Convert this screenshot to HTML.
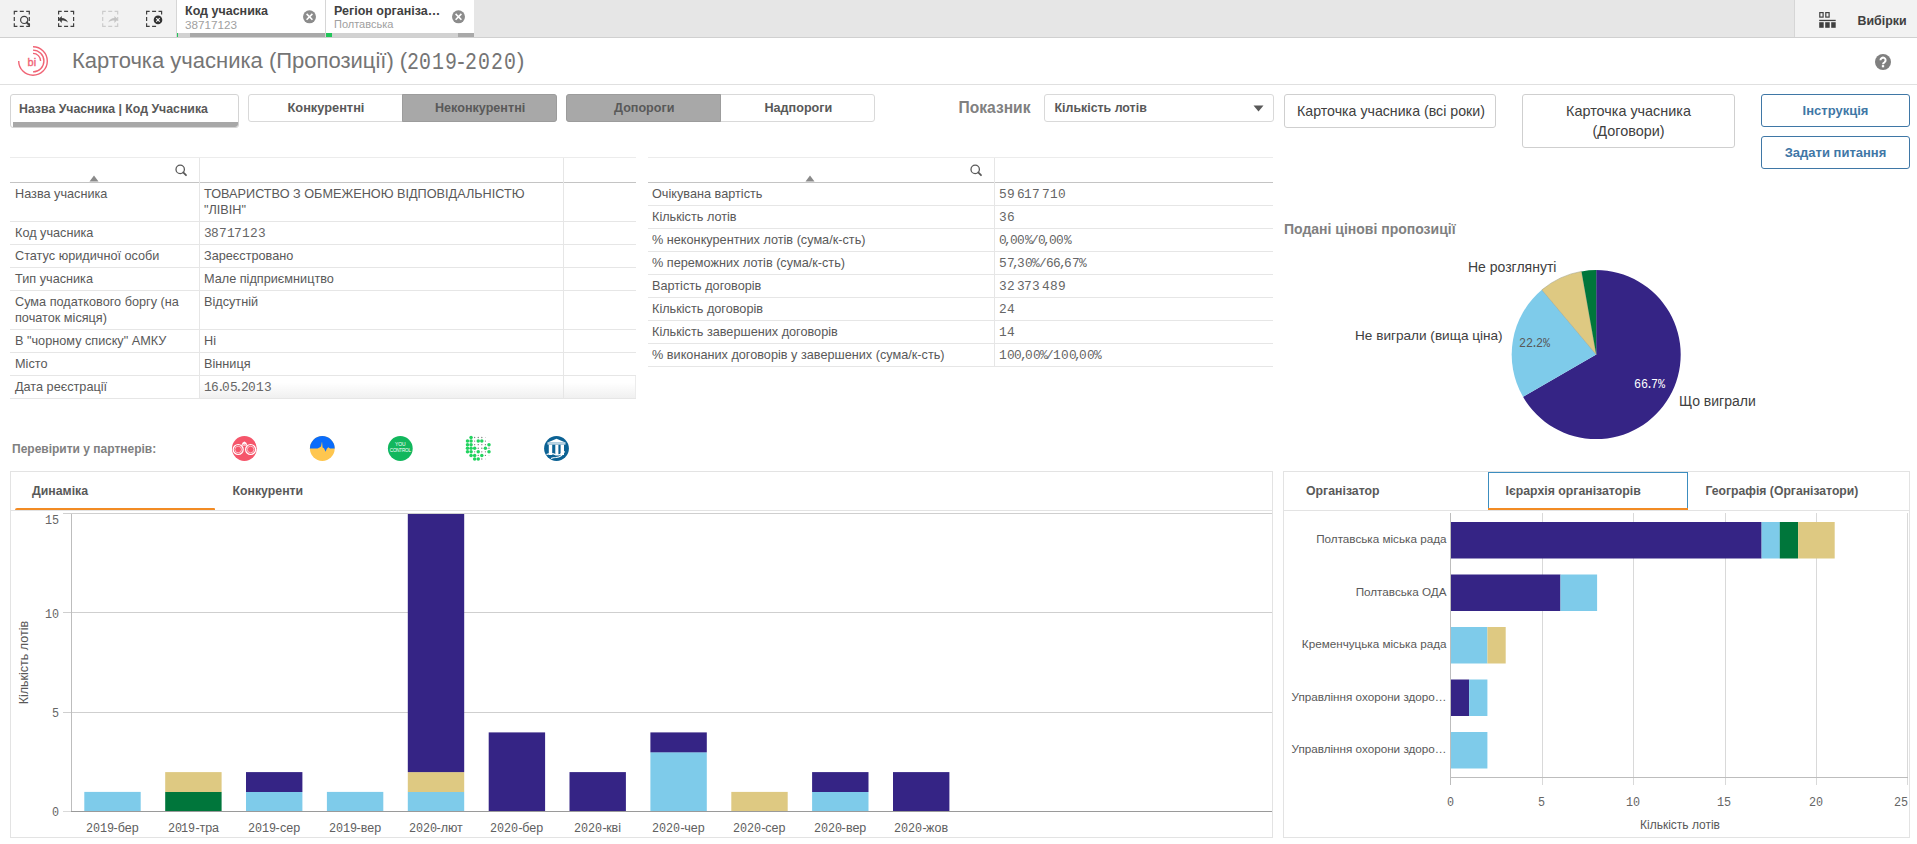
<!DOCTYPE html>
<html><head><meta charset="utf-8">
<style>
*{box-sizing:border-box;margin:0;padding:0}
html,body{width:1917px;height:844px;overflow:hidden;background:#fff;font-family:"Liberation Sans",sans-serif;color:#595959}
.a{position:absolute;white-space:nowrap;line-height:1}
.mono{font-family:"Liberation Mono",monospace}
.b{font-weight:bold}
.ln{position:absolute;background:#e6e6e6}
.td{font-size:12.7px;line-height:16px;color:#595959}
.td.mono{font-size:12.5px;letter-spacing:-0.85px}
.ax{font-size:12px;letter-spacing:-0.8px;color:#595959;line-height:1}
.bx{position:absolute;border:1px solid #d9d9d9;border-radius:3px;background:#fff}
</style></head><body>
<!-- ============ TOOLBAR ============ -->
<div class="ln" style="left:0;top:0;width:1917px;height:37px;background:#e6e6e6"></div>
<div class="ln" style="left:0;top:37px;width:1917px;height:1px;background:#d0d0d0"></div>
<div class="ln" style="left:0;top:0;width:176px;height:37px;background:#f2f2f2"></div>
<div class="ln" style="left:1794px;top:0;width:123px;height:37px;background:#f2f2f2;border-left:1px solid #d6d6d6"></div>
<svg class="a" style="left:0;top:0" width="176" height="37">
<path d="M14.3 14.5 V11.4 H17.400000000000002 M26.2 11.4 H29.3 V14.5 M14.3 23.299999999999997 V26.4 H17.400000000000002 M26.2 26.4 H29.3 V23.299999999999997 M19.80 11.4 H23.80 M19.80 26.4 H23.80 M14.3 16.90 V20.90 M29.3 16.90 V20.90" fill="none" stroke="#404040" stroke-width="1.2"/>
<path d="M58.6 14.5 V11.4 H61.7 M70.5 11.4 H73.6 V14.5 M58.6 23.299999999999997 V26.4 H61.7 M70.5 26.4 H73.6 V23.299999999999997 M64.10 11.4 H68.10 M64.10 26.4 H68.10 M58.6 16.90 V20.90 M73.6 16.90 V20.90" fill="none" stroke="#404040" stroke-width="1.2"/>
<path d="M102.7 14.5 V11.4 H105.8 M114.60000000000001 11.4 H117.7 V14.5 M102.7 23.299999999999997 V26.4 H105.8 M114.60000000000001 26.4 H117.7 V23.299999999999997 M108.20 11.4 H112.20 M108.20 26.4 H112.20 M102.7 16.90 V20.90 M117.7 16.90 V20.90" fill="none" stroke="#cccccc" stroke-width="1.2"/>
<path d="M146.6 14.5 V11.4 H149.7 M158.5 11.4 H161.6 V14.5 M146.6 23.299999999999997 V26.4 H149.7 M152.10 11.4 H156.10 M152.10 26.4 H156.10 M146.6 16.90 V20.90" fill="none" stroke="#404040" stroke-width="1.2"/>
<circle cx="24.2" cy="19.9" r="3.6" fill="none" stroke="#404040" stroke-width="1.2"/>
<line x1="26.8" y1="22.5" x2="29.2" y2="24.9" stroke="#404040" stroke-width="1.9" stroke-linecap="round"/>
<path d="M58.3 19.3 L61.8 15.9 L61.8 18.0 C64.5 18.0 67 19.5 68 22.6 C66.3 21.0 64.3 20.6 61.8 20.6 L61.8 22.9 Z" fill="#404040"/>
<path d="M117.9 19.3 L114.4 15.9 L114.4 18.0 C111.7 18.0 109.2 19.5 108.2 22.6 C109.9 21.0 111.9 20.6 114.4 20.6 L114.4 22.9 Z" fill="#c4c4c4"/>
<circle cx="158" cy="19.9" r="4.3" fill="#333"/>
<path d="M156.3 18.2 L159.7 21.6 M159.7 18.2 L156.3 21.6" stroke="#fff" stroke-width="1.1"/>
</svg>
<!-- selection tabs -->
<div class="ln" style="left:176px;top:0;width:149px;height:37px;background:#fff;border-left:1px solid #d6d6d6"></div>
<div class="ln" style="left:325px;top:0;width:149px;height:37px;background:#fff;border-left:1px solid #d6d6d6"></div>
<div class="ln" style="left:177px;top:33px;width:148px;height:4px;background:#a9a9a9"></div>
<div class="ln" style="left:177px;top:33px;width:13px;height:4px;background:#d2d2d2"></div>
<div class="ln" style="left:177px;top:33px;width:1px;height:4px;background:#22c55a"></div>
<div class="ln" style="left:326px;top:33px;width:148px;height:4px;background:#d2d2d2"></div>
<div class="ln" style="left:326px;top:33px;width:6px;height:4px;background:#22c55a"></div>
<div class="ln" style="left:458px;top:33px;width:16px;height:4px;background:#a9a9a9"></div>
<div class="a b" style="left:185px;top:4.5px;font-size:12.5px;color:#404040">Код учасника</div>
<div class="a" style="left:185px;top:18.8px;font-size:11.7px;color:#a0a0a0">38717123</div>
<div class="a b" style="left:334px;top:4.5px;font-size:12.5px;color:#404040">Регіон організа…</div>
<div class="a" style="left:334px;top:18.8px;font-size:11px;color:#a0a0a0">Полтавська</div>
<svg class="a" style="left:300.5px;top:9px" width="17" height="17"><circle cx="8.5" cy="7.8" r="6.5" fill="#8c8c8c"/><path d="M5.6 4.9 L11.4 10.7 M11.4 4.9 L5.6 10.7" stroke="#fff" stroke-width="1.6"/></svg>
<svg class="a" style="left:449.5px;top:9px" width="17" height="17"><circle cx="8.5" cy="7.8" r="6.5" fill="#8c8c8c"/><path d="M5.6 4.9 L11.4 10.7 M11.4 4.9 L5.6 10.7" stroke="#fff" stroke-width="1.6"/></svg>
<!-- right selections -->
<svg class="a" style="left:1818px;top:11px" width="20" height="18">
 <rect x="1.8" y="1.6" width="3.3" height="4.5" fill="none" stroke="#404040" stroke-width="1.2"/>
 <rect x="7.8" y="1.6" width="3.3" height="4.5" fill="none" stroke="#404040" stroke-width="1.2"/>
 <rect x="1.2" y="8.8" width="16.5" height="1.3" fill="#404040"/>
 <rect x="1.2" y="11.2" width="4.5" height="5.6" fill="#404040"/>
 <rect x="7.2" y="11.2" width="4.5" height="5.6" fill="#404040"/>
 <rect x="13.2" y="11.2" width="4.5" height="5.6" fill="#404040"/>
</svg>
<div class="a b" style="left:1857.5px;top:14.5px;font-size:12.4px;color:#404040">Вибірки</div>

<!-- ============ TITLE ============ -->
<svg class="a" style="left:12px;top:40px" width="44" height="42">
 <g fill="none" stroke="#f06475" stroke-width="1.4">
  <path d="M21 6.7 A14.3 14.3 0 1 1 6.7 21"/>
  <path d="M21 10.1 A10.9 10.9 0 0 1 21 31.9"/>
  <path d="M21 13.4 A7.6 7.6 0 0 1 28.6 21"/>
 </g>
 <text x="15.6" y="26.1" font-family="Liberation Sans" font-size="11" fill="#f06475" stroke="#f06475" stroke-width="0.35">bi</text>
</svg>
<div class="a" id="t1" style="left:72px;top:49.8px;font-size:22px;color:#757575;letter-spacing:0px">Карточка учасника (Пропозиції) (</div>
<div class="a" id="t2" style="left:517px;top:49.8px;font-size:22px;color:#757575">)</div>
<svg class="a" style="left:1874px;top:53px" width="18" height="18"><circle cx="9" cy="9" r="8" fill="#808080"/><path d="M6.5 7.3 A2.55 2.55 0 1 1 10.5 9.3 Q9 10.1 9 11.3" fill="none" stroke="#fff" stroke-width="2"/><rect x="7.85" y="12.1" width="2.3" height="2.2" fill="#fff"/></svg>
<div class="ln" style="left:0;top:84px;width:1917px;height:1px;background:#e0e0e0"></div>

<!-- ============ FILTER ROW ============ -->
<div class="bx" style="left:10px;top:94px;width:229px;height:34px;border-radius:3px;border-color:#d4d4d4"></div>
<div class="ln" style="left:13px;top:122px;width:225px;height:5px;background:#a8a8a8;border-radius:0 0 3px 0"></div>
<div class="a b" style="left:19px;top:102.5px;font-size:12.3px;color:#595959">Назва Учасника | Код Учасника</div>

<div class="bx" style="left:248px;top:94px;width:309px;height:28px"></div>
<div class="ln" style="left:402px;top:94px;width:155px;height:28px;background:#a8a8a8;border:1px solid #9c9c9c;border-radius:0 3px 3px 0"></div>
<div class="a b" style="left:287.5px;top:101.7px;font-size:12.8px;color:#595959">Конкурентні</div>
<div class="a b" style="left:435px;top:101.8px;font-size:12.6px;color:#595959">Неконкурентні</div>

<div class="bx" style="left:566px;top:94px;width:309px;height:28px"></div>
<div class="ln" style="left:566px;top:94px;width:155px;height:28px;background:#a8a8a8;border:1px solid #9c9c9c;border-radius:3px 0 0 3px"></div>
<div class="a b" style="left:614px;top:102px;font-size:12.6px;color:#595959">Допороги</div>
<div class="a b" style="left:764.5px;top:102px;font-size:12.6px;color:#595959">Надпороги</div>

<div class="a b" style="left:958.5px;top:100.2px;font-size:15.6px;color:#808080">Показник</div>
<div class="bx" style="left:1044px;top:94px;width:230px;height:28px"></div>
<div class="a b" style="left:1054.5px;top:101.5px;font-size:12.4px;color:#595959">Кількість лотів</div>
<svg class="a" style="left:1253px;top:104.8px" width="12" height="8"><path d="M0.5 0.5 L10.5 0.5 L5.5 6.5 Z" fill="#595959"/></svg>

<div class="bx" style="left:1284px;top:94px;width:212px;height:34px;border-color:#cfcfcf"></div>
<div class="a" style="left:1297px;top:103.5px;font-size:14.2px;color:#404040">Карточка учасника (всі роки)</div>
<div class="bx" style="left:1522px;top:94px;width:213px;height:54px;border-color:#cfcfcf"></div>
<div class="a" style="left:1522px;top:103px;width:213px;text-align:center;font-size:14.4px;color:#404040;line-height:20px;white-space:normal;top:100.5px">Карточка учасника<br>(Договори)</div>
<div class="bx" style="left:1761px;top:94px;width:149px;height:33px;border-color:#3f77a6"></div>
<div class="a b" style="left:1761px;top:104px;width:149px;text-align:center;font-size:13px;color:#3f77a6">Інструкція</div>
<div class="bx" style="left:1761px;top:136px;width:149px;height:33px;border-color:#3f77a6"></div>
<div class="a b" style="left:1761px;top:146px;width:149px;text-align:center;font-size:13px;color:#3f77a6">Задати питання</div>

<span class="a mono" style="left:406.52px;top:51.76px;font-size:23.1px;color:#757575;transform:scaleX(0.86);transform-origin:0 0">2</span>
<span class="a mono" style="left:419.48px;top:51.76px;font-size:23.1px;color:#757575;transform:scaleX(0.86);transform-origin:0 0">0</span>
<span class="a mono" style="left:432.44px;top:51.76px;font-size:23.1px;color:#757575;transform:scaleX(0.86);transform-origin:0 0">1</span>
<span class="a mono" style="left:445.40px;top:51.76px;font-size:23.1px;color:#757575;transform:scaleX(0.86);transform-origin:0 0">9</span>
<span class="a mono" style="left:455.12px;top:51.76px;font-size:23.1px;color:#757575;transform:scaleX(0.86);transform-origin:0 0">-</span>
<span class="a mono" style="left:464.84px;top:51.76px;font-size:23.1px;color:#757575;transform:scaleX(0.86);transform-origin:0 0">2</span>
<span class="a mono" style="left:477.80px;top:51.76px;font-size:23.1px;color:#757575;transform:scaleX(0.86);transform-origin:0 0">0</span>
<span class="a mono" style="left:490.76px;top:51.76px;font-size:23.1px;color:#757575;transform:scaleX(0.86);transform-origin:0 0">2</span>
<span class="a mono" style="left:503.72px;top:51.76px;font-size:23.1px;color:#757575;transform:scaleX(0.86);transform-origin:0 0">0</span>
<!-- TABLES -->
<div class="ln" style="left:10px;top:157px;width:626px;height:1px;background:#ececec"></div>
<div class="ln" style="left:10px;top:182px;width:626px;height:1px;background:#c4c4c4"></div>
<div class="ln" style="left:10px;top:221px;width:626px;height:1px;background:#e6e6e6"></div>
<div class="ln" style="left:10px;top:244px;width:626px;height:1px;background:#e6e6e6"></div>
<div class="ln" style="left:10px;top:267px;width:626px;height:1px;background:#e6e6e6"></div>
<div class="ln" style="left:10px;top:290px;width:626px;height:1px;background:#e6e6e6"></div>
<div class="ln" style="left:10px;top:329px;width:626px;height:1px;background:#e6e6e6"></div>
<div class="ln" style="left:10px;top:352px;width:626px;height:1px;background:#e6e6e6"></div>
<div class="ln" style="left:10px;top:375px;width:626px;height:1px;background:#e6e6e6"></div>
<div class="ln" style="left:10px;top:398px;width:626px;height:1px;background:#e6e6e6"></div>
<div class="ln" style="left:200px;top:376px;width:436px;height:22px;background:linear-gradient(#fff 30%,#f0f0f0);border-right:1px solid #ececec"></div>
<div class="ln" style="left:199px;top:158px;width:1px;height:240px;background:#e6e6e6"></div>
<div class="ln" style="left:563px;top:158px;width:1px;height:240px;background:#e6e6e6"></div>
<div class="a td" style="left:15px;top:186px">Назва учасника</div>
<div class="a td" style="left:204px;top:186px">ТОВАРИСТВО З ОБМЕЖЕНОЮ ВІДПОВІДАЛЬНІСТЮ<br>"ЛІВІН"</div>
<div class="a td" style="left:15px;top:225px">Код учасника</div>
<span class="a mono" style="left:203.60px;top:227.09px;font-size:13.5px;color:#666;transform:scaleX(0.95);transform-origin:0 0">3</span>
<span class="a mono" style="left:211.30px;top:227.09px;font-size:13.5px;color:#666;transform:scaleX(0.95);transform-origin:0 0">8</span>
<span class="a mono" style="left:219.00px;top:227.09px;font-size:13.5px;color:#666;transform:scaleX(0.95);transform-origin:0 0">7</span>
<span class="a mono" style="left:226.70px;top:227.09px;font-size:13.5px;color:#666;transform:scaleX(0.95);transform-origin:0 0">1</span>
<span class="a mono" style="left:234.40px;top:227.09px;font-size:13.5px;color:#666;transform:scaleX(0.95);transform-origin:0 0">7</span>
<span class="a mono" style="left:242.10px;top:227.09px;font-size:13.5px;color:#666;transform:scaleX(0.95);transform-origin:0 0">1</span>
<span class="a mono" style="left:249.80px;top:227.09px;font-size:13.5px;color:#666;transform:scaleX(0.95);transform-origin:0 0">2</span>
<span class="a mono" style="left:257.50px;top:227.09px;font-size:13.5px;color:#666;transform:scaleX(0.95);transform-origin:0 0">3</span>
<div class="a td" style="left:15px;top:248px">Статус юридичної особи</div>
<div class="a td" style="left:204px;top:248px">Зареєстровано</div>
<div class="a td" style="left:15px;top:271px">Тип учасника</div>
<div class="a td" style="left:204px;top:271px">Мале підприємництво</div>
<div class="a td" style="left:15px;top:294px">Сума податкового боргу (на<br>початок місяця)</div>
<div class="a td" style="left:204px;top:294px">Відсутній</div>
<div class="a td" style="left:15px;top:333px">В "чорному списку" АМКУ</div>
<div class="a td" style="left:204px;top:333px">Ні</div>
<div class="a td" style="left:15px;top:356px">Місто</div>
<div class="a td" style="left:204px;top:356px">Вінниця</div>
<div class="a td" style="left:15px;top:379px">Дата реєстрації</div>
<span class="a mono" style="left:203.60px;top:381.09px;font-size:13.5px;color:#666;transform:scaleX(0.95);transform-origin:0 0">1</span>
<span class="a mono" style="left:211.30px;top:381.09px;font-size:13.5px;color:#666;transform:scaleX(0.95);transform-origin:0 0">6</span>
<span class="a mono" style="left:216.69px;top:381.09px;font-size:13.5px;color:#666;transform:scaleX(0.95);transform-origin:0 0">.</span>
<span class="a mono" style="left:222.08px;top:381.09px;font-size:13.5px;color:#666;transform:scaleX(0.95);transform-origin:0 0">0</span>
<span class="a mono" style="left:229.78px;top:381.09px;font-size:13.5px;color:#666;transform:scaleX(0.95);transform-origin:0 0">5</span>
<span class="a mono" style="left:235.17px;top:381.09px;font-size:13.5px;color:#666;transform:scaleX(0.95);transform-origin:0 0">.</span>
<span class="a mono" style="left:240.56px;top:381.09px;font-size:13.5px;color:#666;transform:scaleX(0.95);transform-origin:0 0">2</span>
<span class="a mono" style="left:248.26px;top:381.09px;font-size:13.5px;color:#666;transform:scaleX(0.95);transform-origin:0 0">0</span>
<span class="a mono" style="left:255.96px;top:381.09px;font-size:13.5px;color:#666;transform:scaleX(0.95);transform-origin:0 0">1</span>
<span class="a mono" style="left:263.66px;top:381.09px;font-size:13.5px;color:#666;transform:scaleX(0.95);transform-origin:0 0">3</span>
<div class="ln" style="left:648px;top:157px;width:625px;height:1px;background:#ececec"></div>
<div class="ln" style="left:648px;top:182px;width:625px;height:1px;background:#c4c4c4"></div>
<div class="ln" style="left:648px;top:205px;width:625px;height:1px;background:#e6e6e6"></div>
<div class="ln" style="left:648px;top:228px;width:625px;height:1px;background:#e6e6e6"></div>
<div class="ln" style="left:648px;top:251px;width:625px;height:1px;background:#e6e6e6"></div>
<div class="ln" style="left:648px;top:274px;width:625px;height:1px;background:#e6e6e6"></div>
<div class="ln" style="left:648px;top:297px;width:625px;height:1px;background:#e6e6e6"></div>
<div class="ln" style="left:648px;top:320px;width:625px;height:1px;background:#e6e6e6"></div>
<div class="ln" style="left:648px;top:343px;width:625px;height:1px;background:#e6e6e6"></div>
<div class="ln" style="left:648px;top:366px;width:625px;height:1px;background:#e6e6e6"></div>
<div class="ln" style="left:994px;top:158px;width:1px;height:208px;background:#e6e6e6"></div>
<div class="a td" style="left:652px;top:186px">Очікувана вартість</div>
<span class="a mono" style="left:998.85px;top:188.09px;font-size:13.5px;color:#666;transform:scaleX(0.95);transform-origin:0 0">5</span>
<span class="a mono" style="left:1006.55px;top:188.09px;font-size:13.5px;color:#666;transform:scaleX(0.95);transform-origin:0 0">9</span>
<span class="a mono" style="left:1016.64px;top:188.09px;font-size:13.5px;color:#666;transform:scaleX(0.95);transform-origin:0 0">6</span>
<span class="a mono" style="left:1024.34px;top:188.09px;font-size:13.5px;color:#666;transform:scaleX(0.95);transform-origin:0 0">1</span>
<span class="a mono" style="left:1032.04px;top:188.09px;font-size:13.5px;color:#666;transform:scaleX(0.95);transform-origin:0 0">7</span>
<span class="a mono" style="left:1042.13px;top:188.09px;font-size:13.5px;color:#666;transform:scaleX(0.95);transform-origin:0 0">7</span>
<span class="a mono" style="left:1049.83px;top:188.09px;font-size:13.5px;color:#666;transform:scaleX(0.95);transform-origin:0 0">1</span>
<span class="a mono" style="left:1057.53px;top:188.09px;font-size:13.5px;color:#666;transform:scaleX(0.95);transform-origin:0 0">0</span>
<div class="a td" style="left:652px;top:209px">Кількість лотів</div>
<span class="a mono" style="left:998.85px;top:211.09px;font-size:13.5px;color:#666;transform:scaleX(0.95);transform-origin:0 0">3</span>
<span class="a mono" style="left:1006.55px;top:211.09px;font-size:13.5px;color:#666;transform:scaleX(0.95);transform-origin:0 0">6</span>
<div class="a td" style="left:652px;top:232px">% неконкурентних лотів (сума/к-сть)</div>
<span class="a mono" style="left:998.85px;top:234.09px;font-size:13.5px;color:#666;transform:scaleX(0.95);transform-origin:0 0">0</span>
<span class="a mono" style="left:1004.24px;top:234.09px;font-size:13.5px;color:#666;transform:scaleX(0.95);transform-origin:0 0">,</span>
<span class="a mono" style="left:1009.63px;top:234.09px;font-size:13.5px;color:#666;transform:scaleX(0.95);transform-origin:0 0">0</span>
<span class="a mono" style="left:1017.33px;top:234.09px;font-size:13.5px;color:#666;transform:scaleX(0.95);transform-origin:0 0">0</span>
<span class="a mono" style="left:1024.69px;top:234.09px;font-size:13.5px;color:#666;transform:scaleX(0.95);transform-origin:0 0">%</span>
<span class="a mono" style="left:1031.08px;top:234.09px;font-size:13.5px;color:#666;transform:scaleX(0.95);transform-origin:0 0">/</span>
<span class="a mono" style="left:1037.81px;top:234.09px;font-size:13.5px;color:#666;transform:scaleX(0.95);transform-origin:0 0">0</span>
<span class="a mono" style="left:1043.20px;top:234.09px;font-size:13.5px;color:#666;transform:scaleX(0.95);transform-origin:0 0">,</span>
<span class="a mono" style="left:1048.59px;top:234.09px;font-size:13.5px;color:#666;transform:scaleX(0.95);transform-origin:0 0">0</span>
<span class="a mono" style="left:1056.29px;top:234.09px;font-size:13.5px;color:#666;transform:scaleX(0.95);transform-origin:0 0">0</span>
<span class="a mono" style="left:1063.65px;top:234.09px;font-size:13.5px;color:#666;transform:scaleX(0.95);transform-origin:0 0">%</span>
<div class="a td" style="left:652px;top:255px">% переможних лотів (сума/к-сть)</div>
<span class="a mono" style="left:998.85px;top:257.09px;font-size:13.5px;color:#666;transform:scaleX(0.95);transform-origin:0 0">5</span>
<span class="a mono" style="left:1006.55px;top:257.09px;font-size:13.5px;color:#666;transform:scaleX(0.95);transform-origin:0 0">7</span>
<span class="a mono" style="left:1011.94px;top:257.09px;font-size:13.5px;color:#666;transform:scaleX(0.95);transform-origin:0 0">,</span>
<span class="a mono" style="left:1017.33px;top:257.09px;font-size:13.5px;color:#666;transform:scaleX(0.95);transform-origin:0 0">3</span>
<span class="a mono" style="left:1025.03px;top:257.09px;font-size:13.5px;color:#666;transform:scaleX(0.95);transform-origin:0 0">0</span>
<span class="a mono" style="left:1032.39px;top:257.09px;font-size:13.5px;color:#666;transform:scaleX(0.95);transform-origin:0 0">%</span>
<span class="a mono" style="left:1038.78px;top:257.09px;font-size:13.5px;color:#666;transform:scaleX(0.95);transform-origin:0 0">/</span>
<span class="a mono" style="left:1045.51px;top:257.09px;font-size:13.5px;color:#666;transform:scaleX(0.95);transform-origin:0 0">6</span>
<span class="a mono" style="left:1053.21px;top:257.09px;font-size:13.5px;color:#666;transform:scaleX(0.95);transform-origin:0 0">6</span>
<span class="a mono" style="left:1058.60px;top:257.09px;font-size:13.5px;color:#666;transform:scaleX(0.95);transform-origin:0 0">,</span>
<span class="a mono" style="left:1063.99px;top:257.09px;font-size:13.5px;color:#666;transform:scaleX(0.95);transform-origin:0 0">6</span>
<span class="a mono" style="left:1071.69px;top:257.09px;font-size:13.5px;color:#666;transform:scaleX(0.95);transform-origin:0 0">7</span>
<span class="a mono" style="left:1079.05px;top:257.09px;font-size:13.5px;color:#666;transform:scaleX(0.95);transform-origin:0 0">%</span>
<div class="a td" style="left:652px;top:278px">Вартість договорів</div>
<span class="a mono" style="left:998.85px;top:280.09px;font-size:13.5px;color:#666;transform:scaleX(0.95);transform-origin:0 0">3</span>
<span class="a mono" style="left:1006.55px;top:280.09px;font-size:13.5px;color:#666;transform:scaleX(0.95);transform-origin:0 0">2</span>
<span class="a mono" style="left:1016.64px;top:280.09px;font-size:13.5px;color:#666;transform:scaleX(0.95);transform-origin:0 0">3</span>
<span class="a mono" style="left:1024.34px;top:280.09px;font-size:13.5px;color:#666;transform:scaleX(0.95);transform-origin:0 0">7</span>
<span class="a mono" style="left:1032.04px;top:280.09px;font-size:13.5px;color:#666;transform:scaleX(0.95);transform-origin:0 0">3</span>
<span class="a mono" style="left:1042.13px;top:280.09px;font-size:13.5px;color:#666;transform:scaleX(0.95);transform-origin:0 0">4</span>
<span class="a mono" style="left:1049.83px;top:280.09px;font-size:13.5px;color:#666;transform:scaleX(0.95);transform-origin:0 0">8</span>
<span class="a mono" style="left:1057.53px;top:280.09px;font-size:13.5px;color:#666;transform:scaleX(0.95);transform-origin:0 0">9</span>
<div class="a td" style="left:652px;top:301px">Кількість договорів</div>
<span class="a mono" style="left:998.85px;top:303.09px;font-size:13.5px;color:#666;transform:scaleX(0.95);transform-origin:0 0">2</span>
<span class="a mono" style="left:1006.55px;top:303.09px;font-size:13.5px;color:#666;transform:scaleX(0.95);transform-origin:0 0">4</span>
<div class="a td" style="left:652px;top:324px">Кількість завершених договорів</div>
<span class="a mono" style="left:998.85px;top:326.09px;font-size:13.5px;color:#666;transform:scaleX(0.95);transform-origin:0 0">1</span>
<span class="a mono" style="left:1006.55px;top:326.09px;font-size:13.5px;color:#666;transform:scaleX(0.95);transform-origin:0 0">4</span>
<div class="a td" style="left:652px;top:347px">% виконаних договорів у завершених (сума/к-сть)</div>
<span class="a mono" style="left:998.85px;top:349.09px;font-size:13.5px;color:#666;transform:scaleX(0.95);transform-origin:0 0">1</span>
<span class="a mono" style="left:1006.55px;top:349.09px;font-size:13.5px;color:#666;transform:scaleX(0.95);transform-origin:0 0">0</span>
<span class="a mono" style="left:1014.25px;top:349.09px;font-size:13.5px;color:#666;transform:scaleX(0.95);transform-origin:0 0">0</span>
<span class="a mono" style="left:1019.64px;top:349.09px;font-size:13.5px;color:#666;transform:scaleX(0.95);transform-origin:0 0">,</span>
<span class="a mono" style="left:1025.03px;top:349.09px;font-size:13.5px;color:#666;transform:scaleX(0.95);transform-origin:0 0">0</span>
<span class="a mono" style="left:1032.73px;top:349.09px;font-size:13.5px;color:#666;transform:scaleX(0.95);transform-origin:0 0">0</span>
<span class="a mono" style="left:1040.09px;top:349.09px;font-size:13.5px;color:#666;transform:scaleX(0.95);transform-origin:0 0">%</span>
<span class="a mono" style="left:1046.48px;top:349.09px;font-size:13.5px;color:#666;transform:scaleX(0.95);transform-origin:0 0">/</span>
<span class="a mono" style="left:1053.21px;top:349.09px;font-size:13.5px;color:#666;transform:scaleX(0.95);transform-origin:0 0">1</span>
<span class="a mono" style="left:1060.91px;top:349.09px;font-size:13.5px;color:#666;transform:scaleX(0.95);transform-origin:0 0">0</span>
<span class="a mono" style="left:1068.61px;top:349.09px;font-size:13.5px;color:#666;transform:scaleX(0.95);transform-origin:0 0">0</span>
<span class="a mono" style="left:1074.00px;top:349.09px;font-size:13.5px;color:#666;transform:scaleX(0.95);transform-origin:0 0">,</span>
<span class="a mono" style="left:1079.39px;top:349.09px;font-size:13.5px;color:#666;transform:scaleX(0.95);transform-origin:0 0">0</span>
<span class="a mono" style="left:1087.09px;top:349.09px;font-size:13.5px;color:#666;transform:scaleX(0.95);transform-origin:0 0">0</span>
<span class="a mono" style="left:1094.45px;top:349.09px;font-size:13.5px;color:#666;transform:scaleX(0.95);transform-origin:0 0">%</span>
<svg class="a" style="left:88.5px;top:175px" width="10" height="7"><path d="M0.5 6.5 L5 0.5 L9.5 6.5 Z" fill="#8a8a8a"/></svg>
<svg class="a" style="left:174px;top:163px" width="14" height="14"><circle cx="6.2" cy="6.4" r="4.2" fill="none" stroke="#595959" stroke-width="1.3"/><line x1="9.2" y1="9.4" x2="12" y2="12.2" stroke="#595959" stroke-width="1.8" stroke-linecap="round"/></svg>
<svg class="a" style="left:804.5px;top:175px" width="10" height="7"><path d="M0.5 6.5 L5 0.5 L9.5 6.5 Z" fill="#8a8a8a"/></svg>
<svg class="a" style="left:969px;top:163px" width="14" height="14"><circle cx="6.2" cy="6.4" r="4.2" fill="none" stroke="#595959" stroke-width="1.3"/><line x1="9.2" y1="9.4" x2="12" y2="12.2" stroke="#595959" stroke-width="1.8" stroke-linecap="round"/></svg>
<!-- /TABLES -->
<div class="a b" style="left:1284px;top:222px;font-size:14px;color:#808080">Подані цінові пропозиції</div>
<svg class="a" style="left:1500px;top:260px" width="200" height="190"><g transform="translate(-1500 -260)">
 <path d="M1596.20 354.60 L1596.20 270.10 A84.5 84.5 0 1 1 1523.02 396.85 Z" fill="#352485"/>
 <path d="M1596.20 354.60 L1523.02 396.85 A84.5 84.5 0 0 1 1541.88 289.87 Z" fill="#7ecbea"/>
 <path d="M1596.20 354.60 L1541.88 289.87 A84.5 84.5 0 0 1 1581.53 271.38 Z" fill="#dec982" stroke="#9b9b7a" stroke-width="0.5"/>
 <path d="M1596.20 354.60 L1581.53 271.38 A84.5 84.5 0 0 1 1596.20 270.10 Z" fill="#00763b"/>
</g></svg>
<span class="a mono" style="left:1633.93px;top:378.09px;font-size:13.5px;color:#fff;transform:scaleX(0.87);transform-origin:0 0">6</span>
<span class="a mono" style="left:1641.03px;top:378.09px;font-size:13.5px;color:#fff;transform:scaleX(0.87);transform-origin:0 0">6</span>
<span class="a mono" style="left:1646.00px;top:378.09px;font-size:13.5px;color:#fff;transform:scaleX(0.87);transform-origin:0 0">.</span>
<span class="a mono" style="left:1650.97px;top:378.09px;font-size:13.5px;color:#fff;transform:scaleX(0.87);transform-origin:0 0">7</span>
<span class="a mono" style="left:1657.75px;top:378.09px;font-size:13.5px;color:#fff;transform:scaleX(0.87);transform-origin:0 0">%</span>
<span class="a mono" style="left:1519.03px;top:336.89px;font-size:13.5px;color:#595959;transform:scaleX(0.87);transform-origin:0 0">2</span>
<span class="a mono" style="left:1526.13px;top:336.89px;font-size:13.5px;color:#595959;transform:scaleX(0.87);transform-origin:0 0">2</span>
<span class="a mono" style="left:1531.10px;top:336.89px;font-size:13.5px;color:#595959;transform:scaleX(0.87);transform-origin:0 0">.</span>
<span class="a mono" style="left:1536.07px;top:336.89px;font-size:13.5px;color:#595959;transform:scaleX(0.87);transform-origin:0 0">2</span>
<span class="a mono" style="left:1542.85px;top:336.89px;font-size:13.5px;color:#595959;transform:scaleX(0.87);transform-origin:0 0">%</span>
<div class="a" style="left:1468px;top:260px;font-size:14px;color:#404040">Не розглянуті</div>
<div class="a" style="left:1355px;top:329px;font-size:13.6px;color:#404040">Не виграли (вища ціна)</div>
<div class="a" style="left:1679px;top:394px;font-size:14px;color:#404040">Що виграли</div>
<div class="a b" style="left:12px;top:442.5px;font-size:12px;color:#808080">Перевірити у партнерів:</div>
<svg class="a" style="left:200px;top:420px" width="400" height="60"><g transform="translate(-200 0)">
 <circle cx="244.4" cy="28.5" r="12.4" fill="#f5556a"/>
 <g fill="none" stroke="#fff"><circle cx="238.2" cy="29.5" r="5.0" stroke-width="1.2"/><circle cx="250.6" cy="29.5" r="5.0" stroke-width="1.2"/><circle cx="238.2" cy="29.5" r="3.3" stroke-width="0.6"/><circle cx="250.6" cy="29.5" r="3.3" stroke-width="0.6"/></g>
 <path d="M241.3 25.5 Q242.2 22.3 244.4 21.6 Q246.6 22.3 247.5 25.5 Z" fill="#fff"/>
 <path d="M242.5 24.8 Q244.4 23.6 246.3 24.8" fill="none" stroke="#f5556a" stroke-width="0.6"/>
 <clipPath id="cp2"><circle cx="322.3" cy="28.5" r="12.4"/></clipPath>
 <g clip-path="url(#cp2)"><rect x="309" y="15" width="27" height="27" fill="#fec64f"/><path d="M309 15 H336 V28.6 L330 28.6 L328.3 27.2 L326.8 28.8 L325.6 31.8 L324 28.2 L322.6 27.5 L322 21.4 L321 26.5 L319.5 27.6 L317.5 28.6 L309 28.6 Z" fill="#0a6cfb"/></g>
 <circle cx="400.3" cy="28.5" r="12.4" fill="#12b75d"/>
 <text x="400.3" y="26.3" text-anchor="middle" font-family="Liberation Sans" font-size="5" fill="#fff">YOU</text>
 <text x="400.3" y="31.8" text-anchor="middle" font-family="Liberation Sans" font-size="4.6" letter-spacing="-0.2" fill="#fff">CONTROL</text>
 <circle cx="471.08" cy="17.50" r="1.75" fill="#22d35f"/><circle cx="474.66" cy="17.50" r="0.65" fill="#777"/><circle cx="478.24" cy="17.50" r="0.65" fill="#777"/><circle cx="481.82" cy="17.50" r="0.65" fill="#777"/><circle cx="485.40" cy="17.50" r="0.4" fill="#aaa"/><circle cx="467.50" cy="21.08" r="1.75" fill="#22d35f"/><circle cx="471.08" cy="21.08" r="1.75" fill="#22d35f"/><circle cx="474.66" cy="21.08" r="0.65" fill="#777"/><circle cx="478.24" cy="21.08" r="1.75" fill="#22d35f"/><circle cx="481.82" cy="21.08" r="1.75" fill="#22d35f"/><circle cx="485.40" cy="21.08" r="0.65" fill="#777"/><circle cx="488.98" cy="21.08" r="0.4" fill="#aaa"/><circle cx="467.50" cy="24.66" r="1.75" fill="#22d35f"/><circle cx="471.08" cy="24.66" r="1.75" fill="#22d35f"/><circle cx="474.66" cy="24.66" r="0.65" fill="#777"/><circle cx="478.24" cy="24.66" r="0.65" fill="#777"/><circle cx="481.82" cy="24.66" r="0.65" fill="#777"/><circle cx="485.40" cy="24.66" r="0.65" fill="#777"/><circle cx="488.98" cy="24.66" r="1.75" fill="#22d35f"/><circle cx="467.50" cy="28.24" r="1.75" fill="#22d35f"/><circle cx="471.08" cy="28.24" r="1.75" fill="#22d35f"/><circle cx="474.66" cy="28.24" r="1.75" fill="#22d35f"/><circle cx="478.24" cy="28.24" r="0.65" fill="#777"/><circle cx="481.82" cy="28.24" r="0.65" fill="#777"/><circle cx="485.40" cy="28.24" r="1.75" fill="#22d35f"/><circle cx="488.98" cy="28.24" r="0.65" fill="#777"/><circle cx="467.50" cy="31.82" r="1.75" fill="#22d35f"/><circle cx="471.08" cy="31.82" r="1.75" fill="#22d35f"/><circle cx="474.66" cy="31.82" r="0.65" fill="#777"/><circle cx="478.24" cy="31.82" r="1.75" fill="#22d35f"/><circle cx="481.82" cy="31.82" r="0.65" fill="#777"/><circle cx="485.40" cy="31.82" r="0.65" fill="#777"/><circle cx="488.98" cy="31.82" r="1.75" fill="#22d35f"/><circle cx="471.08" cy="35.40" r="1.75" fill="#22d35f"/><circle cx="474.66" cy="35.40" r="1.75" fill="#22d35f"/><circle cx="478.24" cy="35.40" r="0.65" fill="#777"/><circle cx="481.82" cy="35.40" r="1.75" fill="#22d35f"/><circle cx="485.40" cy="35.40" r="0.65" fill="#777"/><circle cx="488.98" cy="35.40" r="0.4" fill="#aaa"/><circle cx="474.66" cy="38.98" r="1.75" fill="#22d35f"/><circle cx="478.24" cy="38.98" r="1.75" fill="#22d35f"/><circle cx="481.82" cy="38.98" r="0.65" fill="#777"/><circle cx="485.40" cy="38.98" r="0.4" fill="#aaa"/>
 <circle cx="556.5" cy="28.5" r="12.4" fill="#0c6294"/>
 <path d="M547.5 22.5 L556.5 18.8 L565.5 22.5 Z" fill="#fff"/><rect x="547.5" y="22.2" width="18" height="2.5" fill="#bcd5e4"/>
 <rect x="548.8" y="24.7" width="3.4" height="10.3" fill="#fff"/><rect x="555.3" y="24.7" width="3.1" height="10.3" fill="#fff"/><rect x="560.6" y="24.7" width="3.4" height="10.3" fill="#fff"/>
 <path d="M546.5 34.5 Q552 32.5 556 35 Q560 35.5 564.5 31.5 Q562 37 556 37.5 Q553 37.5 551 38.5" fill="none" stroke="#fff" stroke-width="1.1"/>
</g></svg>
<div class="ln" style="left:10px;top:471px;width:1263px;height:367px;background:transparent;border:1px solid #e3e3e3"></div>
<div class="ln" style="left:11px;top:510px;width:1261px;height:1px;background:#e3e3e3"></div>
<div class="ln" style="left:15px;top:508px;width:200px;height:2px;background:#f28b24;border-radius:2px 1px 0 0"></div>
<div class="a b" style="left:32px;top:485px;font-size:12.3px;color:#595959">Динаміка</div>
<div class="a b" style="left:232.5px;top:485px;font-size:12.3px;color:#595959">Конкуренти</div>
<svg class="a" style="left:0;top:500px" width="1280" height="340"><g transform="translate(0 -500)">
<line x1="63" y1="513.5" x2="1272" y2="513.5" stroke="#cfcfcf" stroke-width="1"/>
<line x1="63" y1="612.5" x2="1272" y2="612.5" stroke="#cfcfcf" stroke-width="1"/>
<line x1="63" y1="712.5" x2="1272" y2="712.5" stroke="#cfcfcf" stroke-width="1"/>
<line x1="63" y1="811.5" x2="71" y2="811.5" stroke="#d9d9d9" stroke-width="1"/>
<rect x="84.3" y="791.9" width="56.4" height="19.9" fill="#7ecbea"/>
<rect x="165.2" y="791.9" width="56.4" height="19.9" fill="#00763b"/>
<rect x="165.2" y="772.1" width="56.4" height="19.9" fill="#dec982"/>
<rect x="246.0" y="791.9" width="56.4" height="19.9" fill="#7ecbea"/>
<rect x="246.0" y="772.1" width="56.4" height="19.9" fill="#352485"/>
<rect x="326.9" y="791.9" width="56.4" height="19.9" fill="#7ecbea"/>
<rect x="407.8" y="791.9" width="56.4" height="19.9" fill="#7ecbea"/>
<rect x="407.8" y="772.1" width="56.4" height="19.9" fill="#dec982"/>
<rect x="407.8" y="514.0" width="56.4" height="258.1" fill="#352485"/>
<rect x="488.7" y="732.4" width="56.4" height="79.4" fill="#352485"/>
<rect x="569.5" y="772.1" width="56.4" height="39.7" fill="#352485"/>
<rect x="650.4" y="752.2" width="56.4" height="59.5" fill="#7ecbea"/>
<rect x="650.4" y="732.4" width="56.4" height="19.9" fill="#352485"/>
<rect x="731.3" y="791.9" width="56.4" height="19.9" fill="#dec982"/>
<rect x="812.1" y="791.9" width="56.4" height="19.9" fill="#7ecbea"/>
<rect x="812.1" y="772.1" width="56.4" height="19.9" fill="#352485"/>
<rect x="893.0" y="772.1" width="56.4" height="39.7" fill="#352485"/>
<line x1="71.5" y1="514" x2="71.5" y2="811" stroke="#bdbdbd" stroke-width="1"/>
<line x1="71" y1="811.5" x2="1272" y2="811.5" stroke="#9a9a9a" stroke-width="1"/>
</g></svg>
<span class="a mono" style="left:44.93px;top:513.89px;font-size:13.5px;color:#666;transform:scaleX(0.87);transform-origin:0 0">1</span>
<span class="a mono" style="left:51.83px;top:513.89px;font-size:13.5px;color:#666;transform:scaleX(0.87);transform-origin:0 0">5</span>
<span class="a mono" style="left:44.93px;top:607.59px;font-size:13.5px;color:#666;transform:scaleX(0.87);transform-origin:0 0">1</span>
<span class="a mono" style="left:51.83px;top:607.59px;font-size:13.5px;color:#666;transform:scaleX(0.87);transform-origin:0 0">0</span>
<span class="a mono" style="left:51.83px;top:706.69px;font-size:13.5px;color:#666;transform:scaleX(0.87);transform-origin:0 0">5</span>
<span class="a mono" style="left:51.83px;top:805.89px;font-size:13.5px;color:#666;transform:scaleX(0.87);transform-origin:0 0">0</span>
<span class="a mono" style="left:86.02px;top:822.29px;font-size:13.5px;color:#606060;transform:scaleX(0.87);transform-origin:0 0">2</span>
<span class="a mono" style="left:92.92px;top:822.29px;font-size:13.5px;color:#606060;transform:scaleX(0.87);transform-origin:0 0">0</span>
<span class="a mono" style="left:99.82px;top:822.29px;font-size:13.5px;color:#606060;transform:scaleX(0.87);transform-origin:0 0">1</span>
<span class="a mono" style="left:106.72px;top:822.29px;font-size:13.5px;color:#606060;transform:scaleX(0.87);transform-origin:0 0">9</span>
<span class="a mono" style="left:112.24px;top:822.29px;font-size:13.5px;color:#606060;transform:scaleX(0.87);transform-origin:0 0">-</span>
<span class="a" style="left:117.84px;top:822.05px;font-size:12.5px;letter-spacing:0.0px;color:#606060">бер</span>
<span class="a mono" style="left:167.61px;top:822.29px;font-size:13.5px;color:#606060;transform:scaleX(0.87);transform-origin:0 0">2</span>
<span class="a mono" style="left:174.51px;top:822.29px;font-size:13.5px;color:#606060;transform:scaleX(0.87);transform-origin:0 0">0</span>
<span class="a mono" style="left:181.41px;top:822.29px;font-size:13.5px;color:#606060;transform:scaleX(0.87);transform-origin:0 0">1</span>
<span class="a mono" style="left:188.31px;top:822.29px;font-size:13.5px;color:#606060;transform:scaleX(0.87);transform-origin:0 0">9</span>
<span class="a mono" style="left:193.83px;top:822.29px;font-size:13.5px;color:#606060;transform:scaleX(0.87);transform-origin:0 0">-</span>
<span class="a" style="left:199.43px;top:822.05px;font-size:12.5px;letter-spacing:0.0px;color:#606060">тра</span>
<span class="a mono" style="left:248.22px;top:822.29px;font-size:13.5px;color:#606060;transform:scaleX(0.87);transform-origin:0 0">2</span>
<span class="a mono" style="left:255.12px;top:822.29px;font-size:13.5px;color:#606060;transform:scaleX(0.87);transform-origin:0 0">0</span>
<span class="a mono" style="left:262.02px;top:822.29px;font-size:13.5px;color:#606060;transform:scaleX(0.87);transform-origin:0 0">1</span>
<span class="a mono" style="left:268.92px;top:822.29px;font-size:13.5px;color:#606060;transform:scaleX(0.87);transform-origin:0 0">9</span>
<span class="a mono" style="left:274.44px;top:822.29px;font-size:13.5px;color:#606060;transform:scaleX(0.87);transform-origin:0 0">-</span>
<span class="a" style="left:280.03px;top:822.05px;font-size:12.5px;letter-spacing:0.0px;color:#606060">сер</span>
<span class="a mono" style="left:328.89px;top:822.29px;font-size:13.5px;color:#606060;transform:scaleX(0.87);transform-origin:0 0">2</span>
<span class="a mono" style="left:335.79px;top:822.29px;font-size:13.5px;color:#606060;transform:scaleX(0.87);transform-origin:0 0">0</span>
<span class="a mono" style="left:342.69px;top:822.29px;font-size:13.5px;color:#606060;transform:scaleX(0.87);transform-origin:0 0">1</span>
<span class="a mono" style="left:349.59px;top:822.29px;font-size:13.5px;color:#606060;transform:scaleX(0.87);transform-origin:0 0">9</span>
<span class="a mono" style="left:355.11px;top:822.29px;font-size:13.5px;color:#606060;transform:scaleX(0.87);transform-origin:0 0">-</span>
<span class="a" style="left:360.71px;top:822.05px;font-size:12.5px;letter-spacing:0.0px;color:#606060">вер</span>
<span class="a mono" style="left:408.84px;top:822.29px;font-size:13.5px;color:#606060;transform:scaleX(0.87);transform-origin:0 0">2</span>
<span class="a mono" style="left:415.74px;top:822.29px;font-size:13.5px;color:#606060;transform:scaleX(0.87);transform-origin:0 0">0</span>
<span class="a mono" style="left:422.64px;top:822.29px;font-size:13.5px;color:#606060;transform:scaleX(0.87);transform-origin:0 0">2</span>
<span class="a mono" style="left:429.54px;top:822.29px;font-size:13.5px;color:#606060;transform:scaleX(0.87);transform-origin:0 0">0</span>
<span class="a mono" style="left:435.06px;top:822.29px;font-size:13.5px;color:#606060;transform:scaleX(0.87);transform-origin:0 0">-</span>
<span class="a" style="left:440.65px;top:822.05px;font-size:12.5px;letter-spacing:0.0px;color:#606060">лют</span>
<span class="a mono" style="left:490.37px;top:822.29px;font-size:13.5px;color:#606060;transform:scaleX(0.87);transform-origin:0 0">2</span>
<span class="a mono" style="left:497.27px;top:822.29px;font-size:13.5px;color:#606060;transform:scaleX(0.87);transform-origin:0 0">0</span>
<span class="a mono" style="left:504.17px;top:822.29px;font-size:13.5px;color:#606060;transform:scaleX(0.87);transform-origin:0 0">2</span>
<span class="a mono" style="left:511.07px;top:822.29px;font-size:13.5px;color:#606060;transform:scaleX(0.87);transform-origin:0 0">0</span>
<span class="a mono" style="left:516.59px;top:822.29px;font-size:13.5px;color:#606060;transform:scaleX(0.87);transform-origin:0 0">-</span>
<span class="a" style="left:522.19px;top:822.05px;font-size:12.5px;letter-spacing:0.0px;color:#606060">бер</span>
<span class="a mono" style="left:574.33px;top:822.29px;font-size:13.5px;color:#606060;transform:scaleX(0.87);transform-origin:0 0">2</span>
<span class="a mono" style="left:581.23px;top:822.29px;font-size:13.5px;color:#606060;transform:scaleX(0.87);transform-origin:0 0">0</span>
<span class="a mono" style="left:588.13px;top:822.29px;font-size:13.5px;color:#606060;transform:scaleX(0.87);transform-origin:0 0">2</span>
<span class="a mono" style="left:595.03px;top:822.29px;font-size:13.5px;color:#606060;transform:scaleX(0.87);transform-origin:0 0">0</span>
<span class="a mono" style="left:600.55px;top:822.29px;font-size:13.5px;color:#606060;transform:scaleX(0.87);transform-origin:0 0">-</span>
<span class="a" style="left:606.15px;top:822.05px;font-size:12.5px;letter-spacing:0.0px;color:#606060">кві</span>
<span class="a mono" style="left:652.44px;top:822.29px;font-size:13.5px;color:#606060;transform:scaleX(0.87);transform-origin:0 0">2</span>
<span class="a mono" style="left:659.34px;top:822.29px;font-size:13.5px;color:#606060;transform:scaleX(0.87);transform-origin:0 0">0</span>
<span class="a mono" style="left:666.24px;top:822.29px;font-size:13.5px;color:#606060;transform:scaleX(0.87);transform-origin:0 0">2</span>
<span class="a mono" style="left:673.14px;top:822.29px;font-size:13.5px;color:#606060;transform:scaleX(0.87);transform-origin:0 0">0</span>
<span class="a mono" style="left:678.66px;top:822.29px;font-size:13.5px;color:#606060;transform:scaleX(0.87);transform-origin:0 0">-</span>
<span class="a" style="left:684.25px;top:822.05px;font-size:12.5px;letter-spacing:0.0px;color:#606060">чер</span>
<span class="a mono" style="left:733.44px;top:822.29px;font-size:13.5px;color:#606060;transform:scaleX(0.87);transform-origin:0 0">2</span>
<span class="a mono" style="left:740.34px;top:822.29px;font-size:13.5px;color:#606060;transform:scaleX(0.87);transform-origin:0 0">0</span>
<span class="a mono" style="left:747.24px;top:822.29px;font-size:13.5px;color:#606060;transform:scaleX(0.87);transform-origin:0 0">2</span>
<span class="a mono" style="left:754.14px;top:822.29px;font-size:13.5px;color:#606060;transform:scaleX(0.87);transform-origin:0 0">0</span>
<span class="a mono" style="left:759.66px;top:822.29px;font-size:13.5px;color:#606060;transform:scaleX(0.87);transform-origin:0 0">-</span>
<span class="a" style="left:765.25px;top:822.05px;font-size:12.5px;letter-spacing:0.0px;color:#606060">сер</span>
<span class="a mono" style="left:814.11px;top:822.29px;font-size:13.5px;color:#606060;transform:scaleX(0.87);transform-origin:0 0">2</span>
<span class="a mono" style="left:821.01px;top:822.29px;font-size:13.5px;color:#606060;transform:scaleX(0.87);transform-origin:0 0">0</span>
<span class="a mono" style="left:827.91px;top:822.29px;font-size:13.5px;color:#606060;transform:scaleX(0.87);transform-origin:0 0">2</span>
<span class="a mono" style="left:834.81px;top:822.29px;font-size:13.5px;color:#606060;transform:scaleX(0.87);transform-origin:0 0">0</span>
<span class="a mono" style="left:840.33px;top:822.29px;font-size:13.5px;color:#606060;transform:scaleX(0.87);transform-origin:0 0">-</span>
<span class="a" style="left:845.93px;top:822.05px;font-size:12.5px;letter-spacing:0.0px;color:#606060">вер</span>
<span class="a mono" style="left:894.28px;top:822.29px;font-size:13.5px;color:#606060;transform:scaleX(0.87);transform-origin:0 0">2</span>
<span class="a mono" style="left:901.18px;top:822.29px;font-size:13.5px;color:#606060;transform:scaleX(0.87);transform-origin:0 0">0</span>
<span class="a mono" style="left:908.08px;top:822.29px;font-size:13.5px;color:#606060;transform:scaleX(0.87);transform-origin:0 0">2</span>
<span class="a mono" style="left:914.98px;top:822.29px;font-size:13.5px;color:#606060;transform:scaleX(0.87);transform-origin:0 0">0</span>
<span class="a mono" style="left:920.50px;top:822.29px;font-size:13.5px;color:#606060;transform:scaleX(0.87);transform-origin:0 0">-</span>
<span class="a" style="left:926.09px;top:822.05px;font-size:12.5px;letter-spacing:0.0px;color:#606060">жов</span>
<div class="a" style="left:-16px;top:657.5px;width:80px;text-align:center;font-size:12.5px;color:#595959;transform:rotate(-90deg)">Кількість лотів</div>
<div class="ln" style="left:1283px;top:471px;width:627px;height:367px;background:transparent;border:1px solid #e3e3e3"></div>
<div class="ln" style="left:1284px;top:510px;width:625px;height:1px;background:#e3e3e3"></div>
<div class="ln" style="left:1488px;top:472px;width:200px;height:38px;background:transparent;border:1px solid #3c8dbf;border-bottom:none"></div>
<div class="ln" style="left:1488px;top:508px;width:200px;height:2px;background:#f28b24"></div>
<div class="a b" style="left:1306px;top:485px;font-size:12.3px;color:#595959">Організатор</div>
<div class="a b" style="left:1505.5px;top:485px;font-size:12.3px;color:#595959">Ієрархія організаторів</div>
<div class="a b" style="left:1705.5px;top:485px;font-size:12.2px;color:#595959">Географія (Організатори)</div>
<svg class="a" style="left:1440px;top:505px" width="477" height="290"><g transform="translate(-1440 -505)">
<line x1="1542.5" y1="513" x2="1542.5" y2="785" stroke="#d9d9d9" stroke-width="1"/>
<line x1="1633.5" y1="513" x2="1633.5" y2="785" stroke="#d9d9d9" stroke-width="1"/>
<line x1="1725.5" y1="513" x2="1725.5" y2="785" stroke="#d9d9d9" stroke-width="1"/>
<line x1="1816.5" y1="513" x2="1816.5" y2="785" stroke="#d9d9d9" stroke-width="1"/>
<line x1="1907.5" y1="513" x2="1907.5" y2="785" stroke="#d9d9d9" stroke-width="1"/>
<rect x="1450.8" y="522.0" width="310.8" height="36.5" fill="#352485"/>
<rect x="1761.6" y="522.0" width="18.3" height="36.5" fill="#7ecbea"/>
<rect x="1779.8" y="522.0" width="18.3" height="36.5" fill="#00763b"/>
<rect x="1798.1" y="522.0" width="36.6" height="36.5" fill="#dec982"/>
<rect x="1450.8" y="574.5" width="109.7" height="36.5" fill="#352485"/>
<rect x="1560.5" y="574.5" width="36.6" height="36.5" fill="#7ecbea"/>
<rect x="1450.8" y="627.0" width="36.6" height="36.5" fill="#7ecbea"/>
<rect x="1487.4" y="627.0" width="18.3" height="36.5" fill="#dec982"/>
<rect x="1450.8" y="679.5" width="18.3" height="36.5" fill="#352485"/>
<rect x="1469.1" y="679.5" width="18.3" height="36.5" fill="#7ecbea"/>
<rect x="1450.8" y="732.0" width="36.6" height="36.5" fill="#7ecbea"/>
<line x1="1450.5" y1="513" x2="1450.5" y2="785" stroke="#bdbdbd" stroke-width="1"/>
<line x1="1450" y1="777.5" x2="1908" y2="777.5" stroke="#bdbdbd" stroke-width="1"/>
</g></svg>
<div class="a" style="left:1246px;width:200.5px;text-align:right;top:533.3px;font-size:11.7px;color:#595959">Полтавська міська рада</div>
<div class="a" style="left:1246px;width:200.5px;text-align:right;top:585.8px;font-size:11.7px;color:#595959">Полтавська ОДА</div>
<div class="a" style="left:1246px;width:200.5px;text-align:right;top:638.3px;font-size:11.7px;color:#595959">Кременчуцька міська рада</div>
<div class="a" style="left:1246px;width:200.5px;text-align:right;top:690.8px;font-size:11.7px;color:#595959">Управління охорони здоро…</div>
<div class="a" style="left:1246px;width:200.5px;text-align:right;top:743.3px;font-size:11.7px;color:#595959">Управління охорони здоро…</div>
<span class="a mono" style="left:1446.68px;top:796.39px;font-size:13.5px;color:#666;transform:scaleX(0.87);transform-origin:0 0">0</span>
<span class="a mono" style="left:1538.08px;top:796.39px;font-size:13.5px;color:#666;transform:scaleX(0.87);transform-origin:0 0">5</span>
<span class="a mono" style="left:1626.03px;top:796.39px;font-size:13.5px;color:#666;transform:scaleX(0.87);transform-origin:0 0">1</span>
<span class="a mono" style="left:1632.93px;top:796.39px;font-size:13.5px;color:#666;transform:scaleX(0.87);transform-origin:0 0">0</span>
<span class="a mono" style="left:1717.43px;top:796.39px;font-size:13.5px;color:#666;transform:scaleX(0.87);transform-origin:0 0">1</span>
<span class="a mono" style="left:1724.33px;top:796.39px;font-size:13.5px;color:#666;transform:scaleX(0.87);transform-origin:0 0">5</span>
<span class="a mono" style="left:1808.83px;top:796.39px;font-size:13.5px;color:#666;transform:scaleX(0.87);transform-origin:0 0">2</span>
<span class="a mono" style="left:1815.73px;top:796.39px;font-size:13.5px;color:#666;transform:scaleX(0.87);transform-origin:0 0">0</span>
<span class="a mono" style="left:1894.33px;top:796.39px;font-size:13.5px;color:#666;transform:scaleX(0.87);transform-origin:0 0">2</span>
<span class="a mono" style="left:1901.23px;top:796.39px;font-size:13.5px;color:#666;transform:scaleX(0.87);transform-origin:0 0">5</span>
<div class="a" style="left:1620px;width:120px;text-align:center;top:818.5px;font-size:12px;color:#595959">Кількість лотів</div>
</body></html>
